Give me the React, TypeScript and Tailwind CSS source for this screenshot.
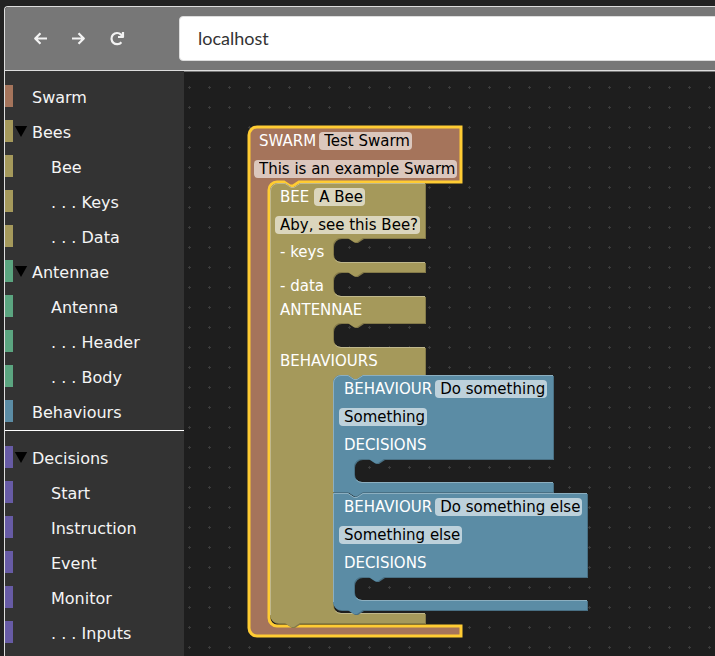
import { ReactNode } from "react";

type Row = { label: string; color: string; indent?: boolean; open?: boolean };

const BEE = "bg-[#a5995b]";
const ANTENNA = "bg-[#5ba580]";
const DECISION = "bg-[#675ba5]";

const structure: Row[] = [
  { label: "Swarm", color: "bg-[#a5745b]" },
  { label: "Bees", color: BEE, open: true },
  { label: "Bee", color: BEE, indent: true },
  { label: ". . . Keys", color: BEE, indent: true },
  { label: ". . . Data", color: BEE, indent: true },
  { label: "Antennae", color: ANTENNA, open: true },
  { label: "Antenna", color: ANTENNA, indent: true },
  { label: ". . . Header", color: ANTENNA, indent: true },
  { label: ". . . Body", color: ANTENNA, indent: true },
  { label: "Behaviours", color: "bg-[#5b8ca5]" },
];

const decisions: Row[] = [
  { label: "Decisions", color: DECISION, open: true },
  { label: "Start", color: DECISION, indent: true },
  { label: "Instruction", color: DECISION, indent: true },
  { label: "Event", color: DECISION, indent: true },
  { label: "Monitor", color: DECISION, indent: true },
  { label: ". . . Inputs", color: DECISION, indent: true },
];

function Category({ label, color, indent, open }: Row) {
  return (
    <li className="flex h-[22px]">
      <span className={`w-2 ${color}`} />
      <button
        type="button"
        aria-expanded={open}
        className="flex flex-1 items-center gap-1 whitespace-pre pl-px text-left text-base text-[#f5f5f5]"
      >
        <svg className="h-3 w-[14px] shrink-0" viewBox="0 0 14 12" aria-hidden="true">
          {open && <path d="M0.8 1H13.2L7 12Z" fill="#000" />}
        </svg>
        <span className={indent ? "pl-[19px] pt-1" : "pt-1"}>{label}</span>
      </button>
    </li>
  );
}

function IconButton({ label, children }: { label: string; children: ReactNode }) {
  return (
    <button type="button" aria-label={label} className="size-4">
      <svg
        viewBox="0 0 16 16"
        className="size-4"
        fill="none"
        stroke="#f2f2f2"
        strokeWidth="2.2"
        strokeLinejoin="round"
      >
        {children}
      </svg>
    </button>
  );
}

function Field({ value, label, tone }: { value: string; label: string; tone: string }) {
  return (
    <input
      aria-label={label}
      defaultValue={value}
      className={`field-sizing-content h-[18px] rounded-sm pl-[5px] pr-0.5 leading-[18px] text-black outline-none ${tone}`}
    />
  );
}

type ShapeProps = { d: string; light?: string; fill: string; dark: string; lightColor?: string; selected?: boolean };

function Shape({ d, light, fill, dark, lightColor, selected }: ShapeProps) {
  return (
    <svg className="pointer-events-none absolute left-0 top-0 size-px overflow-visible" aria-hidden="true">
      <path d={d} fill={dark} transform="translate(1,1)" />
      <path d={d} fill={fill} stroke={selected ? "#fc3" : "none"} strokeWidth="3" />
      {light && <path d={light} fill="none" stroke={lightColor} strokeWidth="1" />}
    </svg>
  );
}

const NOTCH = "l6,4 3,0 6,-4";
const NOTCH_BACK = "l-6,4 -3,0 -6,-4";

/** Mouth cut into a block's right side: starts at the right edge, ends at the lower lip. */
function mouth(x: number, top: number, bottom: number, right: number) {
  return `V${top} H${x + 30} ${NOTCH_BACK} h-7 a8,8 0 0,0 -8,8 V${bottom - 8} a8,8 0 0,0 8,8 H${right}`;
}

function lip(x: number, bottom: number, right: number) {
  return `M${x + 2.3},${bottom - 2} a8,8 0 0,0 5.7,2.5 H${right}`;
}

const swarmPath = `M0,8 A8,8 0 0,1 8,0 H212 ${mouth(20, 55, 499, 212)} V509 H8 a8,8 0 0,1 -8,-8 Z`;

const beePath =
  `M0,8 A8,8 0 0,1 8,0 H15 ${NOTCH} H155 ` +
  mouth(63, 55, 79, 155) +
  mouth(63, 89, 113, 155) +
  mouth(63, 140, 164, 155) +
  mouth(63, 192, 430, 155) +
  ` V440 H30 ${NOTCH_BACK} H8 a8,8 0 0,1 -8,-8 Z`;

const beeLight =
  `M0.5,432 V8 A7.5,7.5 0 0,1 8,0.5 H15 ${NOTCH} H155 ` +
  lip(63, 79, 155) + lip(63, 113, 155) + lip(63, 164, 155) + lip(63, 430, 155);

function behaviourPath(right: number, first: boolean) {
  const start = first ? "M0,8 A8,8 0 0,1 8,0" : "M0,0";
  const end = first ? "H0 Z" : "H8 a8,8 0 0,1 -8,-8 Z";
  return `${start} H15 ${NOTCH} H${right} ${mouth(21, 84, 107, right)} V117 H30 ${NOTCH_BACK} ${end}`;
}

function behaviourLight(right: number, first: boolean) {
  const start = first ? "M0.5,117 V8 A7.5,7.5 0 0,1 8,0.5" : "M0.5,109 V0.5";
  return `${start} H15 ${NOTCH} H${right} ${lip(21, 107, right)}`;
}

function Behaviour({ name, text, right, first }: { name: string; text: string; right: number; first: boolean }) {
  const tone = "bg-[#bdd1db]";
  return (
    <section className="relative h-[118px]">
      <Shape
        d={behaviourPath(right, first)}
        light={behaviourLight(right, first)}
        fill="#5b8ca5"
        dark="#497084"
        lightColor="#8cafc0"
      />
      <div className="relative flex flex-col items-start gap-2.5 pl-1.5 pt-[5px]">
        <div className="flex h-[18px] items-center gap-[3px] pl-[5px]">
          BEHAVIOUR <Field value={name} label="Behaviour name" tone={tone} />
        </div>
        <Field value={text} label="Behaviour description" tone={tone} />
        <div className="flex h-[18px] items-center pl-[5px]">DECISIONS</div>
      </div>
    </section>
  );
}

function Swarm() {
  return (
    <section className="absolute left-[65px] top-[55px] whitespace-nowrap text-[15px] leading-[18px] text-white">
      <Shape d={swarmPath} fill="#a5745b" dark="#845d49" selected />
      <div className="relative flex flex-col items-start gap-2.5 pl-[5px] pt-[5px]">
        <div className="flex h-[18px] items-center gap-[3px] pl-[5px]">
          SWARM <Field value="Test Swarm" label="Swarm name" tone="bg-[#dbc7bd]" />
        </div>
        <Field value="This is an example Swarm" label="Swarm description" tone="bg-[#dbc7bd]" />
      </div>

      <section className="relative ml-[21px] mt-[5px]">
        <Shape d={beePath} light={beeLight} fill="#a5995b" dark="#847a49" lightColor="#c0b88c" />
        <div className="relative flex flex-col items-start gap-2.5 pl-[5px] pt-[5px]">
          <div className="flex h-[18px] items-center gap-[5px] pl-[5px]">
            BEE <Field value="A Bee" label="Bee name" tone="bg-[#dbd6bd]" />
          </div>
          <Field value="Aby, see this Bee?" label="Bee description" tone="bg-[#dbd6bd]" />
        </div>
        <div className="relative flex flex-col pl-2.5 pt-[9px]">
          <div className="h-[34px]">- keys</div>
          <div className="h-6">- data</div>
          <div className="h-[51px]">ANTENNAE</div>
          <div className="h-[23px]">BEHAVIOURS</div>
        </div>
        <div className="ml-[63px]">
          <Behaviour name="Do something" text="Something" right={220} first />
          <Behaviour name="Do something else" text="Something else" right={254} first={false} />
        </div>
      </section>
    </section>
  );
}

export default function App() {
  return (
    <div className="flex h-screen flex-col overflow-hidden bg-[#222] pl-1 pt-1.5 font-['DejaVu_Sans',sans-serif]">
      <div className="flex min-h-0 flex-1 flex-col overflow-hidden rounded-tl border-l border-t border-[#ddd]">
        <header className="flex h-16 shrink-0 items-center border-b border-[#ddd] bg-[#777]">
          <nav className="flex w-[174px] shrink-0 gap-[22px] pl-7">
            <IconButton label="Back">
              <path d="M14 7.5H2.5M7.5 2.2L2.2 7.5L7.5 12.8" />
            </IconButton>
            <IconButton label="Forward">
              <path d="M1 7.5H12.5M7.5 2.2L12.8 7.5L7.5 12.8" />
            </IconButton>
            <IconButton label="Reload">
              <path d="M12.4 11.2A5.6 5.6 0 1 1 12 3.6L13.4 5.2M14 1V6H9" />
            </IconButton>
          </nav>
          <input
            aria-label="Address"
            defaultValue="localhost"
            className="-mr-2 h-[45px] min-w-0 flex-1 rounded border border-[#ddd] bg-white px-[18px] pb-0.5 font-[Lato,sans-serif] text-lg text-[#333] outline-none"
          />
        </header>
        <div className="flex min-h-0 flex-1">
          <aside className="w-[179px] shrink-0 overflow-hidden bg-[#333] pt-3.5">
            <ul className="flex flex-col gap-[13px] border-b border-white pb-2">
              {structure.map((row) => (
                <Category key={row.label} {...row} />
              ))}
            </ul>
            <ul className="flex flex-col gap-[13px] pt-[15px]">
              {decisions.map((row) => (
                <Category key={row.label} {...row} />
              ))}
            </ul>
          </aside>
          <main className="relative min-w-0 flex-1 overflow-hidden border-t border-[#777] bg-[#1e1e1e]">
            <svg className="absolute inset-0 size-full" aria-hidden="true">
              <defs>
                <pattern id="grid" width="20" height="20" x="-5" y="5" patternUnits="userSpaceOnUse">
                  <path d="M9 10.5H12M10.5 9V12" stroke="#3c3c3c" strokeWidth="1" />
                </pattern>
              </defs>
              <rect width="100%" height="100%" fill="url(#grid)" />
            </svg>
            <Swarm />
          </main>
        </div>
      </div>
    </div>
  );
}
